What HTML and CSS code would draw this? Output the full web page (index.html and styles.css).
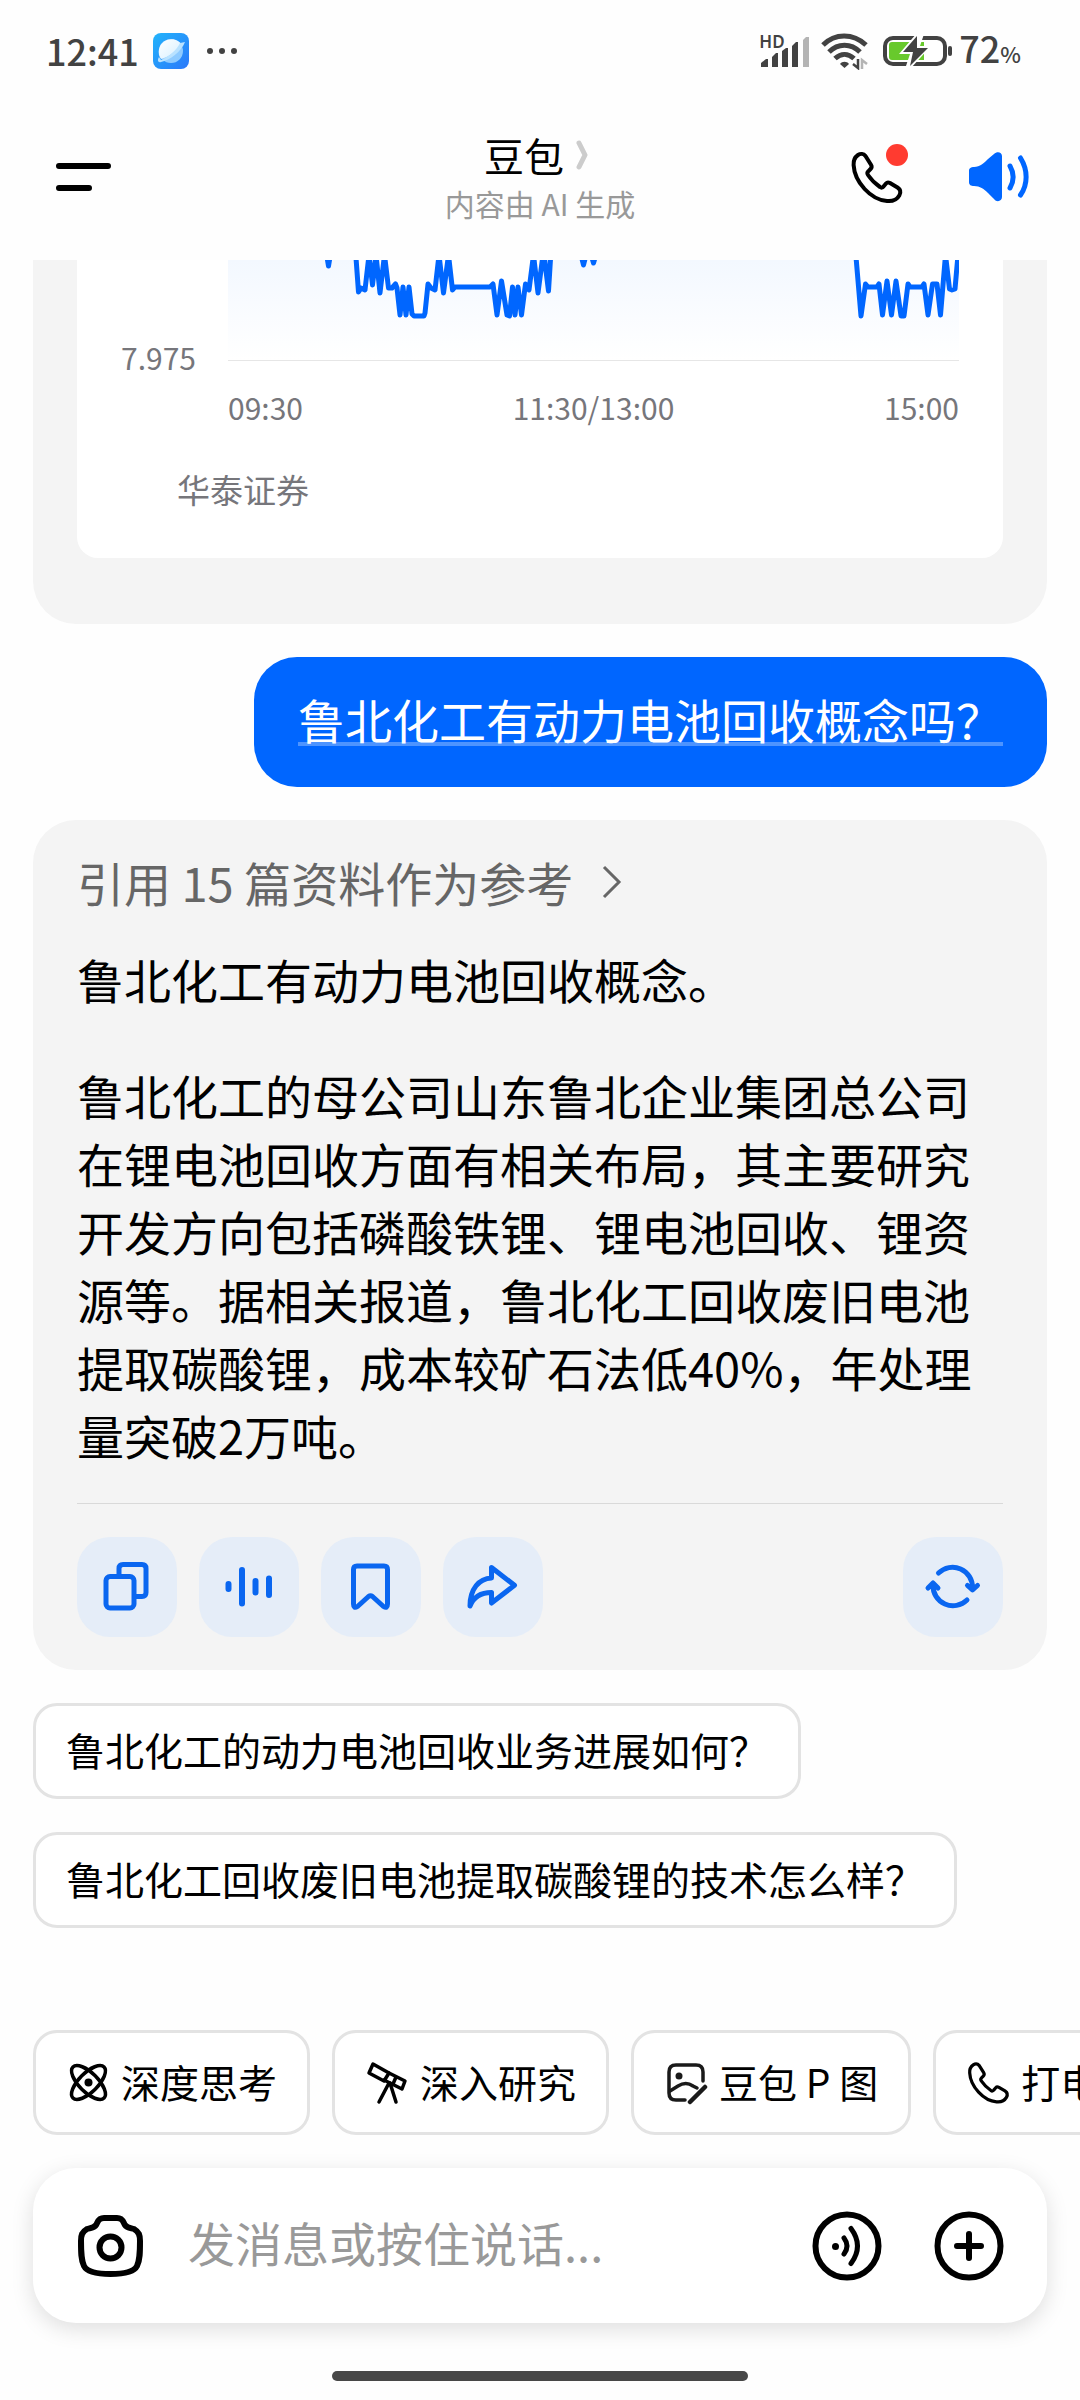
FILE: index.html
```html
<!DOCTYPE html>
<html lang="zh-CN">
<head>
<meta charset="utf-8">
<meta name="viewport" content="width=device-width, initial-scale=1">
<title>豆包</title>
<link rel="stylesheet" href="styles.css">
</head>
<body>
<svg class="sprite" aria-hidden="true">
  <symbol id="phone" viewBox="0 0 56 56">
    <path d="M16.5 7C14.5 4.5 11.5 4.3 9 6C5.5 8.5 4.3 12 4.6 16C5.5 33 22 51 38 52C43 52.5 48 50.5 50.3 46.5C52 43.5 51.5 40.5 48.5 38.5L41 34C39.5 33.2 38 33.3 37 34.5L34.5 37.5C33.5 38.8 32.3 39 31 38C26 34.5 22 30.5 19 26C18 24.5 18 23.5 19.3 22.3L21.5 20C22.8 18.7 23 17.3 22 15.7Z" fill="none" stroke="currentColor" stroke-width="4" stroke-linejoin="round"/>
  </symbol>
</svg>

<div class="status">
  <div class="status-side">
    <span class="clock">12:41</span>
    <svg class="app" width="36" height="36" viewBox="0 0 36 36">
      <defs>
        <linearGradient id="appBg" x1="0" y1="0" x2="1" y2="1"><stop offset="0" stop-color="#22b4fb"/><stop offset="1" stop-color="#2b78fa"/></linearGradient>
        <linearGradient id="appBall" x1="0" y1="0" x2="1" y2="1"><stop offset="0" stop-color="#fff"/><stop offset="1" stop-color="#d5efff"/></linearGradient>
      </defs>
      <rect width="36" height="36" rx="8" fill="url(#appBg)"/>
      <circle cx="18" cy="18" r="12" fill="#8fcbff"/>
      <path d="M8 26A12 12 0 1 1 28.500 11.500C25 17 16 24 8 26Z" fill="url(#appBall)"/>
      <path d="M6 24C4 27 5 30 8 29C17 27 28 19 32 9L27 10C24 17 15 24 8 27Z" fill="#b9e2ff"/>
    </svg>
    <svg width="32" height="8" viewBox="0 0 32 8" fill="#424242"><circle cx="4" cy="4" r="3"/><circle cx="16" cy="4" r="3"/><circle cx="28" cy="4" r="3"/></svg>
  </div>
  <div class="status-side">
    <div class="signal">
      <span class="hd">HD</span>
      <svg width="50" height="36" viewBox="0 0 50 36" fill="#424242">
        <path d="M2 34V30L7 26H9V34Z"/><path d="M13 34V24L17 20H19V34Z"/><path d="M23 34V18L27 15H29V34Z"/><path d="M33 34V13L37 9H39V34Z"/><path d="M44 34V7L47 4H50V34Z" fill="#b4b4b4"/>
      </svg>
    </div>
    <svg class="wifi" width="48" height="38" viewBox="0 0 48 38">
      <g fill="none" stroke="#424242" stroke-width="5"><path d="M2 13C14 1 32 1 45 13"/><path d="M8 20C17 11 30 11 39 20"/><path d="M14 26.500C20 21 27 21 33 26.500"/></g>
      <path d="M19 32C21 29 26 29 28 32L23.500 36Z" fill="#424242"/>
      <path d="M37 27V36L32 32" fill="none" stroke="#424242" stroke-width="2.500"/><path d="M41 37V28L46 32" fill="none" stroke="#b4b4b4" stroke-width="2.500"/>
    </svg>
    <svg class="battery" width="72" height="34" viewBox="0 0 72 34">
      <rect x="2" y="4" width="60" height="26" rx="8" fill="#fff" stroke="#424242" stroke-width="4"/>
      <rect x="65" y="12" width="4" height="10" rx="2" fill="#424242"/>
      <path d="M9 8H41V26H9Q6 26 6 23V11Q6 8 9 8Z" fill="#68c92c"/>
      <path d="M34 -1L16 20H27L22 35L28 34L48 12H37L41 0Z" fill="#fff"/>
      <path d="M34 2L20 18H30L27 32L45 14H34Z" fill="#424242"/>
    </svg>
    <span class="clock">72<small>%</small></span>
  </div>
</div>

<header class="header">
  <div class="header-side">
    <button class="icon-btn" aria-label="菜单">
      <svg width="62" height="30" viewBox="0 0 62 30"><path d="M9 4H58M9 26H39" stroke="#000" stroke-width="6" stroke-linecap="round"/></svg>
    </button>
  </div>
  <div class="title">
    <h1>豆包<svg width="14" height="32" viewBox="0 0 14 32"><path d="M3 4L9 16L3 28" fill="none" stroke="#ccc" stroke-width="5" stroke-linecap="round" stroke-linejoin="round"/></svg></h1>
    <p>内容由 AI 生成</p>
  </div>
  <div class="header-side right">
    <button class="icon-btn call" aria-label="打电话">
      <svg width="56" height="56"><use href="#phone"/></svg>
      <span class="dot"></span>
    </button>
    <button class="icon-btn" aria-label="朗读">
      <svg width="62" height="52" viewBox="0 0 62 52">
        <path d="M6 16C12 16 16 12 20 8L26 3C29 0 34 1 34 5V46C34 50 29 52 26 48L20 42C16 38 12 35 6 35C3 35 1 34 1 31V20C1 17 3 16 6 16Z" fill="#06f"/>
        <path d="M42 15C46 22 46 30 42 37M52.500 7C60 19 60 33 52.500 44" fill="none" stroke="#06f" stroke-width="5" stroke-linecap="round"/>
      </svg>
    </button>
  </div>
</header>

<main class="chat">
  <section class="card quote-card">
    <div class="quote">
      <div class="plot">
        <span class="y-label">7.975</span>
        <svg class="line" viewBox="0 0 731 101" preserveAspectRatio="none">
          <defs><linearGradient id="area" x1="0" y1="0" x2="0" y2="1"><stop offset="0" stop-color="#f3f8ff"/><stop offset="1" stop-color="#fff"/></linearGradient></defs>
          <rect width="731" height="100" fill="url(#area)"/>
          <path class="above" d="M127 -9L131 31L137 28L152 28L161 28L172 27L184 55L196 55L200 24L207 29L211 0L215 30L220 0L225 28L262 27L269 50L273 22L280 50L297 24L301 29L305 0L309 30L315 -9ZM628 -9L633 54L637 25L650 27L654 50L659 22L663 50L668 22L674 54L680 25L695 27L700 50L705 24L709 24L713 50L718 0L722 30L727 30L731 -9Z" fill="#fff"/>
          <path class="trace" d="M98 -9L100.500 6L103 -9M127.500 -9L130.500 32L133 28L137 30L141 -5L144.500 25L148 -5L152 33L156.500 -5L160.500 28H164L167.500 24L169 28L172 55L175 27L178 55L181 27L184 54L186 56H196L197 53L200 24L203 28L207 30L211 -5L215.500 33L220.500 -5L224.500 30L227 27H262L265 24L269 55L273.500 21L279 55L281.500 56L284.500 27L287 55L290 27L293.500 55L297.500 24L301 30L305.500 -5L310 33L315.500 -9L320.500 31L323 -9M352 -9L355.500 5L359 -9L362 -9L365.500 3L369 -9M627.500 -9L633 56L637.500 24L640 27H649L651 24L654.500 55L659 21L663.500 55L668 21L673 56H676L680 24L682 27H694L696 24L700 55L704.500 24H709L712.500 55L717.500 -5L721.500 29L724 30L727 29L730 -5"/>
          <path d="M0 100.500H731" stroke="#e6e6e6" stroke-width="1"/>
        </svg>
      </div>
      <div class="x-labels"><span>09:30</span><span>11:30/13:00</span><span>15:00</span></div>
      <p class="source">华泰证券</p>
    </div>
  </section>

  <section class="bubble"><p>鲁北化工有动力电池回收概念吗？</p></section>

  <section class="card answer">
    <a class="cite" href="#">引用 15 篇资料作为参考<svg width="22" height="36" viewBox="0 0 22 36"><path d="M3 3L18 18L3 33" fill="none" stroke="#666" stroke-width="3"/></svg></a>
    <p>鲁北化工有动力电池回收概念。</p>
    <p>鲁北化工的母公司山东鲁北企业集团总公司在锂电池回收方面有相关布局，其主要研究开发方向包括磷酸铁锂、锂电池回收、锂资源等。据相关报道，鲁北化工回收废旧电池提取碳酸锂，成本较矿石法低40%，年处理量突破2万吨。</p>
    <div class="actions">
      <button aria-label="复制"><svg viewBox="0 0 100 100"><rect x="29" y="39.500" width="28" height="31.500" rx="4"/><path d="M42 39V31.500Q42 27.500 46 27.500H65Q69 27.500 69 31.500V55.500Q69 59.500 65 59.500H58"/></svg></button>
      <button aria-label="语音"><svg viewBox="0 0 100 100"><path d="M29.500 47V52M43 33V66.500M56.500 44V55.500M70 41.500V58" stroke-width="6"/></svg></button>
      <button aria-label="收藏"><svg viewBox="0 0 100 100"><path d="M36 29H63Q66.500 29 66.500 32.500V67Q66.500 72 62.500 69.500L51.500 59.500Q49.500 58 47.500 59.500L36.500 69.500Q32.500 72 32.500 67V32.500Q32.500 29 36 29Z"/></svg></button>
      <button aria-label="分享"><svg viewBox="0 0 100 100"><path d="M48.500 30.500L71.500 48.300L48.500 66V55.500C39 55.500 31 59 27 69C27 52 36 41.500 48.500 41Z"/></svg></button>
      <button class="redo" aria-label="重新生成"><svg viewBox="0 0 100 100"><path d="M35.500 36A20 20 0 0 1 69.500 51M64.500 48.500L69.500 53L74.500 48.500M64 63A20 20 0 0 1 30 48M25 51L30 46L35 51"/></svg></button>
    </div>
  </section>

  <div class="suggestions">
    <button>鲁北化工的动力电池回收业务进展如何？</button>
    <button>鲁北化工回收废旧电池提取碳酸锂的技术怎么样？</button>
  </div>
</main>

<footer class="footer">
  <nav class="tools">
    <button><svg width="45" height="45" viewBox="0 0 45 45" fill="none" stroke="#000" stroke-width="3.500"><ellipse cx="22.500" cy="22.500" rx="22" ry="9.500" transform="rotate(45 22.500 22.500)"/><ellipse cx="22.500" cy="22.500" rx="22" ry="9.500" transform="rotate(-45 22.500 22.500)"/><circle cx="22.500" cy="22.500" r="4" fill="#000" stroke="none"/></svg><span>深度思考</span></button>
    <button><svg width="45" height="45" viewBox="0 0 45 45" fill="none" stroke="#000" stroke-width="3.500" stroke-linejoin="round" stroke-linecap="round"><path d="M8 4L24 13L19 21L4 13Z"/><path d="M24 13L40 21L37 29L19 20"/><path d="M31 17L28 24M24 23L14 42M25 23L31 42"/></svg><span>深入研究</span></button>
    <button><svg width="45" height="45" viewBox="0 0 45 45" fill="none" stroke="#1a1a1a" stroke-width="3.500" stroke-linecap="round"><path d="M21 40H12Q5 40 5 33V12Q5 5 12 5H32Q39 5 39 12V21"/><path d="M6 31L14 26Q22 21 29 26L33 28"/><path d="M26 42L41 27" stroke-width="4.500"/><circle cx="15" cy="16" r="3.500" fill="#1a1a1a" stroke="none"/></svg><span>豆包 P 图</span></button>
    <button><svg width="45" height="45"><use href="#phone"/></svg><span>打电话</span></button>
  </nav>
  <form class="composer">
    <button type="button" class="icon-btn" aria-label="拍照">
      <svg width="67" height="70" viewBox="0 0 67 70" fill="none" stroke="#000" stroke-width="6"><path d="M27 7H40C46 7 46 11 48 14C50 17 54 17 57 18C62 21 63 24 63 30C63 41 63 49 60 55C57 61 45 63 33.500 63C22 63 10 61 7 55C4 49 4 41 4 30C4 24 5 21 10 18C13 17 17 17 19 14C21 11 21 7 27 7Z"/><circle cx="33.500" cy="36.500" r="11"/></svg>
    </button>
    <input type="text" placeholder="发消息或按住说话..." aria-label="消息">
    <button type="button" class="icon-btn" aria-label="语音输入">
      <svg width="70" height="70" viewBox="0 0 70 70" fill="none" stroke="#000" stroke-width="5" stroke-linecap="round"><circle cx="35" cy="35" r="31.500" stroke-width="6"/><circle cx="23.500" cy="35.500" r="3.500" fill="#000" stroke="none"/><path d="M32 27Q38 35 32 43M39 17.500Q52 35 39 52.500"/></svg>
    </button>
    <button type="button" class="icon-btn" aria-label="更多">
      <svg width="70" height="70" viewBox="0 0 70 70" fill="none" stroke="#000" stroke-width="6" stroke-linecap="round"><circle cx="35" cy="35" r="31.500"/><path d="M23 35H47M35 23V47"/></svg>
    </button>
  </form>
  <div class="home-bar"></div>
</footer>
</body>
</html>
```
FILE: styles.css
```css
* { box-sizing: border-box; }

body {
  margin: 0;
  min-height: 100vh;
  display: flex;
  flex-direction: column;
  background: #fefefe;
  color: #000;
  font-family: "Noto Sans CJK SC", sans-serif;
  font-size: 47px;
  line-height: 68px;
  overflow-x: hidden;
}

h1, p { margin: 0; font-weight: 400; }
button { font: inherit; color: inherit; cursor: pointer; }
svg { display: block; flex: none; }
.sprite { position: absolute; width: 0; height: 0; }

.icon-btn { display: block; padding: 0; border: 0; background: none; }

/* system status bar */
.status {
  display: flex;
  justify-content: space-between;
  height: 102px;
  padding: 0 59px 0 46px;
  color: #424242;
}
.status-side { display: flex; align-items: center; }
.clock { padding-bottom: 2px; font-size: 36px; font-weight: 500; line-height: 100px; }
.clock small { font-size: 22px; }
.app { margin: 0 17px 0 14px; }
.signal { position: relative; }
.hd {
  position: absolute;
  left: 0;
  top: 0;
  font-family: "Noto Sans", sans-serif;
  font-size: 17px;
  font-weight: 600;
  line-height: 17px;
}
.wifi { margin: 0 14px 0 12px; }
.battery { margin-right: 4px; }

/* title bar */
.header {
  display: flex;
  align-items: center;
  height: 158px;
  padding: 0 50px 8px;
}
.header-side { flex: 1; display: flex; }
.header-side.right { justify-content: flex-end; align-items: center; gap: 63px; }
.title { margin-bottom: 4px; text-align: center; color: #999; font-size: 30px; line-height: 40px; }
.title h1 {
  display: flex;
  justify-content: center;
  align-items: center;
  gap: 12px;
  padding-right: 6px;
  color: #000;
  font-size: 40px;
  line-height: 56px;
}
.call { position: relative; }
.dot {
  position: absolute;
  top: -5px;
  right: -3px;
  width: 22px;
  height: 22px;
  border-radius: 50%;
  background: #ff3b30;
}

/* conversation */
.chat {
  display: flex;
  flex-direction: column;
  gap: 33px;
  padding: 0 33px;
}
.card { padding: 28px 44px 33px; border-radius: 43px; background: #f4f4f4; }
.quote-card { padding: 0 44px 66px; border-radius: 0 0 43px 43px; }
.quote {
  padding: 0 44px 49px;
  border-radius: 0 0 21px 21px;
  background: #fff;
  color: #76767b;
  font-size: 30px;
  line-height: 40px;
}
.plot { display: flex; align-items: flex-end; gap: 30px; height: 101px; }
.y-label { width: 77px; margin-bottom: -16px; }
.line { flex: 1; min-width: 0; height: 101px; }
.trace { fill: none; stroke: #06f; stroke-width: 5; stroke-linejoin: round; }
.x-labels { display: flex; justify-content: space-between; padding: 26px 0 0 107px; }
.source { padding: 42px 0 0 56px; font-size: 33px; }

.bubble {
  align-self: flex-end;
  padding: 28px 44px 34px;
  border-radius: 43px;
  background: #06f;
  color: #fff;
}
.bubble p {
  text-decoration: underline 4px rgba(255, 255, 255, .3);
  text-underline-offset: 3px;
  text-decoration-skip-ink: none;
}

.answer { display: flex; flex-direction: column; }
.cite {
  display: flex;
  align-items: center;
  gap: 28px;
  margin-bottom: 29px;
  color: #666;
  text-decoration: none;
}
.answer p + p { margin-top: 48px; }
.actions {
  display: flex;
  gap: 22px;
  margin-top: 34px;
  padding-top: 33px;
  border-top: 1px solid #d9d9d9;
}
.actions button {
  width: 100px;
  height: 100px;
  padding: 0;
  border: 0;
  border-radius: 33px;
  background: #e5edf8;
}
.actions svg {
  fill: none;
  stroke: #0a66f0;
  stroke-width: 5;
  stroke-linecap: round;
  stroke-linejoin: round;
}
.actions .redo { margin-left: auto; }

.suggestions { display: flex; flex-direction: column; align-items: flex-start; gap: 33px; }
.suggestions button {
  padding: 14px 30px 18px;
  border: 3px solid #e3e3e3;
  border-radius: 24px;
  background: #fff;
  font-size: 39px;
  line-height: 58px;
  text-align: left;
}

/* bottom area */
.footer { margin-top: auto; padding: 33px 33px 19px; }
.tools { display: flex; gap: 22px; margin-right: -33px; overflow: hidden; }
.tools button {
  display: flex;
  flex: none;
  align-items: center;
  gap: 10px;
  height: 105px;
  padding: 0 30px;
  border: 3px solid #e3e3e3;
  border-radius: 24px;
  background: #fff;
  font-size: 39px;
  line-height: 58px;
  white-space: nowrap;
}
.tools span { padding-bottom: 4px; }
.composer {
  display: flex;
  align-items: center;
  gap: 52px;
  height: 155px;
  margin-top: 33px;
  padding: 0 43px 0 44px;
  border-radius: 43px;
  background: #fff;
  box-shadow: 0 6px 22px rgba(0, 0, 0, .13);
}
.composer input {
  flex: 1;
  min-width: 0;
  margin-left: -8px;
  padding: 0 0 8px;
  border: 0;
  outline: 0;
  background: none;
  font: inherit;
}
.composer input::placeholder { color: #999; opacity: 1; }
.home-bar {
  width: 41%;
  height: 10px;
  margin: 48px auto 0;
  border-radius: 5px;
  background: #474747;
}
```
